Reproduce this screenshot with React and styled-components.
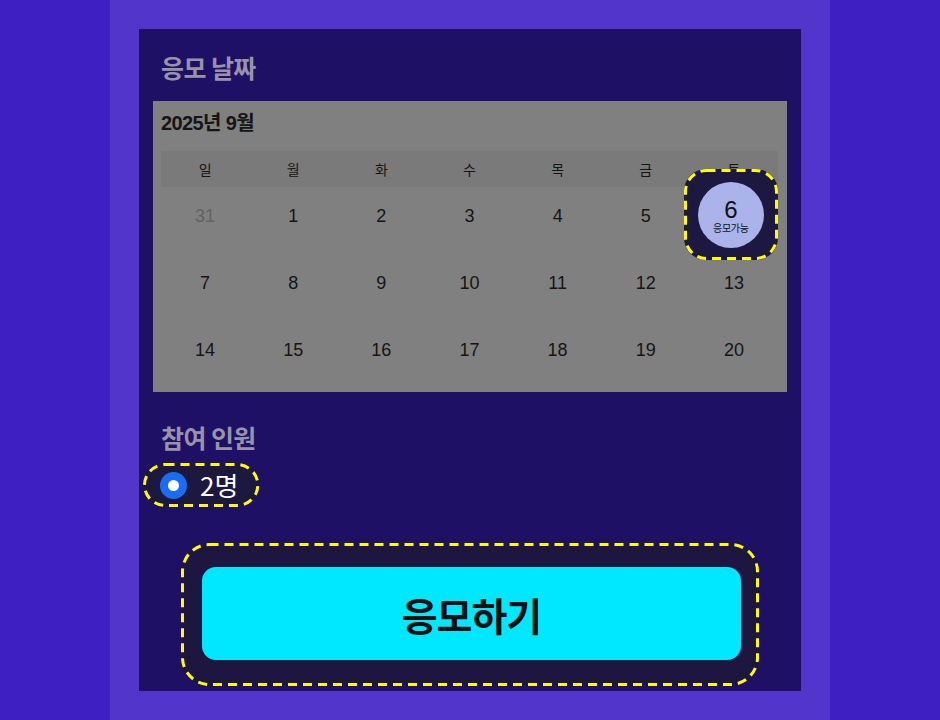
import React from "react";
import styled, { createGlobalStyle } from "styled-components";

const Global = createGlobalStyle`
  html, body { margin: 0; padding: 0; background: #3d1fc2; }
  body { font-family: "Liberation Sans", "Noto Sans CJK KR", sans-serif; }
  * { box-sizing: border-box; }
`;

const Page = styled.div`
  min-height: 720px;
  background: #3d1fc2;
  display: flex;
  justify-content: center;
`;

const Column = styled.div`
  width: 720px;
  min-height: 720px;
  background: #5236cb;
  padding: 29px 29px 0;
`;

const Panel = styled.div`
  height: 662px;
  background: #1e1064;
  padding: 23px 14px 0;
  display: flex;
  flex-direction: column;
`;

const SectionTitle = styled.h2`
  margin: ${(p) => p.$top || 0}px 0 0;
  padding-left: 8px;
  font-family: "Noto Sans CJK KR", sans-serif;
  font-weight: 700;
  font-size: 25px;
  line-height: 30px;
  letter-spacing: -0.6px;
  color: #9893ab;
`;

const Calendar = styled.div`
  margin-top: 19px;
  background: #808080;
  padding: 10px 9px 4px 8px;
`;

const MonthTitle = styled.div`
  font-family: "Liberation Sans", "Noto Sans CJK KR", sans-serif;
  font-weight: 700;
  font-size: 20px;
  line-height: 24px;
  letter-spacing: -0.6px;
  color: #151515;
  margin-bottom: 16px;
`;

const WeekHeader = styled.div`
  display: grid;
  grid-template-columns: repeat(7, 1fr);
  height: 36px;
  background: #7a7a7a;
  align-items: center;
`;

const WeekDay = styled.div`
  text-align: center;
  font-family: "Noto Sans CJK KR", sans-serif;
  font-size: 14px;
  color: #151515;
`;

const DaysGrid = styled.div`
  display: grid;
  grid-template-columns: repeat(7, 1fr);
  grid-auto-rows: 67px;
`;

const DayCell = styled.div`
  position: relative;
  text-align: center;
  padding-top: 19px;
  font-family: "Liberation Sans", sans-serif;
  font-size: 18px;
  line-height: 20px;
  color: ${(p) => (p.$muted ? "#636363" : "#151515")};
`;

const DashSvg = styled.svg`
  position: absolute;
  left: 0;
  top: 0;
  width: 100%;
  height: 100%;
  overflow: visible;
  pointer-events: none;
`;

const DashRect = styled.rect`
  x: 1.5px;
  y: 1.5px;
  width: calc(100% - 3px);
  height: calc(100% - 3px);
  rx: ${(p) => p.$r}px;
  ry: ${(p) => p.$r}px;
  fill: none;
  stroke: #ffff00;
  stroke-width: 3px;
  stroke-dasharray: 9 6;
`;

function DashOutline({ radius }) {
  return (
    <DashSvg aria-hidden="true">
      <DashRect $r={radius} />
    </DashSvg>
  );
}

const Highlight = styled.div`
  position: absolute;
  left: -6px;
  top: -18px;
  width: 94px;
  height: 91px;
  border-radius: 22px;
  background: #1c1840;
  display: flex;
  align-items: center;
  justify-content: center;
  z-index: 2;
`;

const Circle = styled.div`
  width: 66px;
  height: 66px;
  border-radius: 50%;
  background: #aab3ea;
  display: flex;
  flex-direction: column;
  align-items: center;
  justify-content: center;
  color: #111;
`;

const CircleNum = styled.span`
  font-family: "Liberation Sans", sans-serif;
  font-size: 24px;
  line-height: 24px;
  margin-top: 2px;
`;

const CircleLabel = styled.span`
  font-family: "Noto Sans CJK KR", sans-serif;
  font-size: 10px;
  line-height: 12px;
  letter-spacing: -0.3px;
`;

const RadioBox = styled.label`
  position: relative;
  align-self: flex-start;
  margin: 11px 0 0 -10px;
  height: 44px;
  display: inline-flex;
  align-items: center;
  gap: 13px;
  padding: 0 21px 0 17px;
  border-radius: 22px;
  background: #1c1840;
`;

const RadioDot = styled.span`
  width: 27px;
  height: 27px;
  border-radius: 50%;
  background: #1a6cf5;
  display: flex;
  align-items: center;
  justify-content: center;
  &::after {
    content: "";
    width: 11px;
    height: 11px;
    border-radius: 50%;
    background: #ffffff;
  }
`;

const RadioText = styled.span`
  font-family: "Noto Sans CJK KR", sans-serif;
  font-size: 26px;
  line-height: 30px;
  color: #ffffff;
`;

const ButtonFrame = styled.div`
  position: relative;
  margin: 36px 28px 0;
  height: 143px;
  border-radius: 28px;
  background: #1c1640;
  padding: 24px 18px 26px 21px;
  display: flex;
`;

const ApplyButton = styled.button`
  flex: 1;
  border: none;
  border-radius: 14px;
  background: #00e8ff;
  color: #111;
  font-family: "Noto Sans CJK KR", sans-serif;
  font-weight: 700;
  font-size: 39px;
  letter-spacing: -1px;
  cursor: pointer;
`;

const weekDays = ["일", "월", "화", "수", "목", "금", "토"];
const days = [
  [31, true], [1], [2], [3], [4], [5], [6, false, true],
  [7], [8], [9], [10], [11], [12], [13],
  [14], [15], [16], [17], [18], [19], [20],
];

export default function App() {
  return (
    <>
      <Global />
      <Page>
        <Column>
          <Panel>
            <SectionTitle>응모 날짜</SectionTitle>
            <Calendar>
              <MonthTitle>2025년 9월</MonthTitle>
              <WeekHeader>
                {weekDays.map((d) => (
                  <WeekDay key={d}>{d}</WeekDay>
                ))}
              </WeekHeader>
              <DaysGrid>
                {days.map(([n, muted, active]) => (
                  <DayCell key={n} $muted={muted}>
                    {active ? (
                      <Highlight>
                        <DashOutline radius={21} />
                        <Circle>
                          <CircleNum>{n}</CircleNum>
                          <CircleLabel>응모가능</CircleLabel>
                        </Circle>
                      </Highlight>
                    ) : (
                      n
                    )}
                  </DayCell>
                ))}
              </DaysGrid>
            </Calendar>
            <SectionTitle $top={30}>참여 인원</SectionTitle>
            <RadioBox>
              <DashOutline radius={21} />
              <RadioDot />
              <RadioText>2명</RadioText>
            </RadioBox>
            <ButtonFrame>
              <DashOutline radius={27} />
              <ApplyButton>응모하기</ApplyButton>
            </ButtonFrame>
          </Panel>
        </Column>
      </Page>
    </>
  );
}
